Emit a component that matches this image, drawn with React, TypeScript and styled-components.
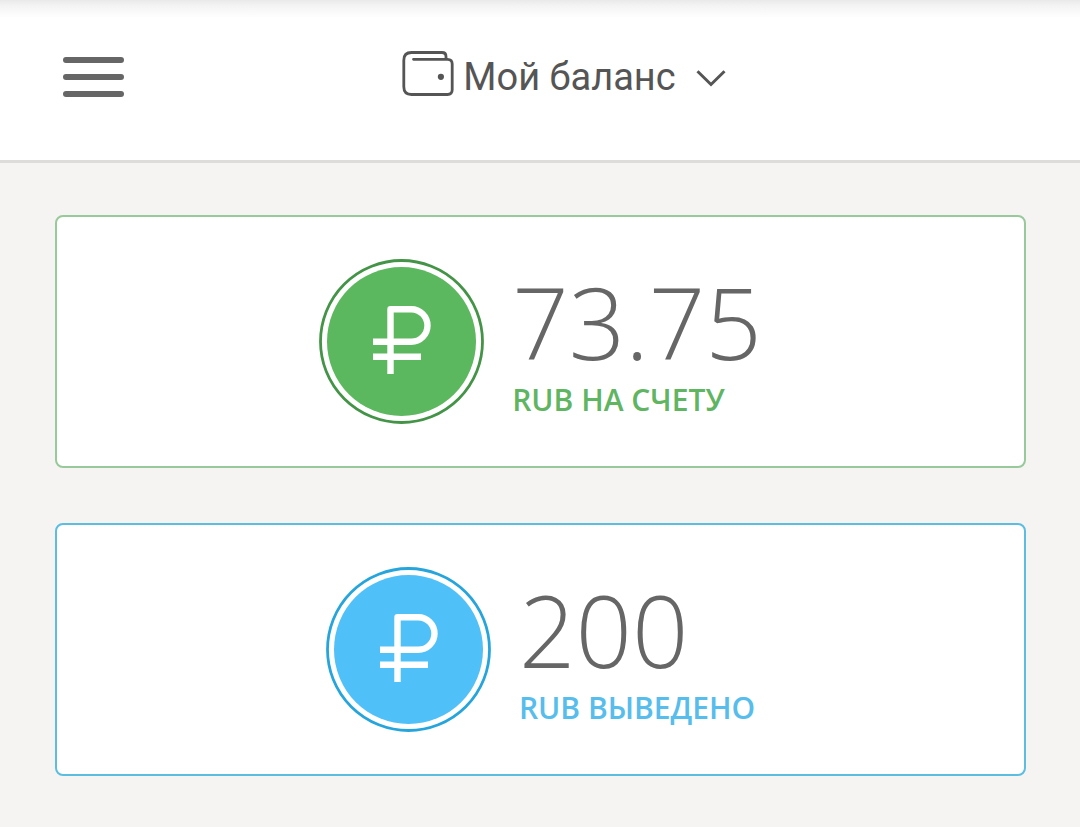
import React from 'react';
import styled, { createGlobalStyle } from 'styled-components';

const GlobalStyle = createGlobalStyle`
  *, *::before, *::after { box-sizing: border-box; }
  body {
    margin: 0;
    min-height: 100vh;
    background: #f5f4f2;
    color: #666;
    font-family: "Open Sans", "Noto Sans", sans-serif;
  }
`;

const Header = styled.header`
  display: flex;
  align-items: center;
  height: 163px;
  padding: 0 76px 6px 63px;
  border-bottom: 3px solid #dddcda;
  background: linear-gradient(#e9e9e9, #f4f4f4 6px, #fff 18px);
`;

const MenuButton = styled.button`
  display: flex;
  flex-direction: column;
  gap: 11px;
  width: 61px;
  padding: 0;
  border: 0;
  background: none;
  cursor: pointer;
`;

const MenuBar = styled.span`
  height: 6px;
  border-radius: 3px;
  background: #666;
`;

const Title = styled.h1`
  flex: 1;
  display: flex;
  justify-content: center;
  margin: 0;
  font-size: 38px;
  font-weight: 400;
`;

const TitleButton = styled.button`
  display: flex;
  align-items: flex-start;
  padding: 0;
  border: 0;
  background: none;
  color: #555;
  font: 400 38px/52px Roboto, "Noto Sans", sans-serif;
  cursor: pointer;

  svg:last-child {
    align-self: center;
  }
`;

const TitleText = styled.span`
  margin: 0 20px 0 9px;
`;

const Cards = styled.main`
  display: flex;
  flex-direction: column;
  gap: 55px;
  padding: 52px 54px 52px 55px;
`;

const Card = styled.section<{ $border: string }>`
  display: flex;
  align-items: center;
  justify-content: center;
  gap: 28px;
  height: 253px;
  border: 2px solid ${(p) => p.$border};
  border-radius: 8px;
  background: #fff;
`;

const Amount = styled.p`
  margin: 0;
  font-size: 99px;
  line-height: 116px;
  font-weight: 300;
  color: #666;
`;

const Caption = styled.p<{ $color: string }>`
  margin: 0;
  font-size: 30px;
  line-height: 40px;
  font-weight: 600;
  color: ${(p) => p.$color};
`;

const WalletIcon = () => (
  <svg width="52" height="46" viewBox="0 0 52 46" fill="none" stroke="currentColor" strokeWidth="2.8" strokeLinecap="round" strokeLinejoin="round" aria-hidden="true">
    <path d="M11.5 8.3H45.5Q50.2 8.3 50.2 13V38.8Q50.2 43.5 45.5 43.5H9.5Q1.8 43.5 1.8 35.8V9.2Q1.8 1.5 9.5 1.5H40Q44 1.5 44 5.5V8.3" />
    <circle cx="38.9" cy="25.8" r="3.1" fill="currentColor" stroke="none" />
  </svg>
);

const ChevronIcon = () => (
  <svg width="30" height="20" viewBox="0 0 30 20" fill="none" stroke="currentColor" strokeWidth="3" aria-hidden="true">
    <path d="M1.5 4.3L15 17.5L28.5 4.3" />
  </svg>
);

const Coin = ({ fill, ring }: { fill: string; ring: string }) => (
  <svg width="165" height="165" viewBox="0 0 165 165" fill="none" aria-hidden="true">
    <circle cx="82.5" cy="82.5" r="81" stroke={ring} strokeWidth="2.8" />
    <circle cx="82.5" cy="82.5" r="74.5" fill={fill} />
    <g stroke="#fff" strokeWidth="6.4" strokeLinecap="butt" strokeLinejoin="round">
      <path d="M71.5 115V50.2H92.2A16.3 16.3 0 0 1 92.2 82.8H54" />
      <path d="M54 97.8H102" />
    </g>
  </svg>
);

const balances = [
  { amount: '73.75', caption: 'RUB НА СЧЕТУ', fill: '#5cb85f', ring: '#439447', border: '#97c99a', text: '#5fb562' },
  { amount: '200', caption: 'RUB ВЫВЕДЕНО', fill: '#4fc1f8', ring: '#26a5dc', border: '#5bbde0', text: '#56bdec' },
];

export default function App() {
  return (
    <>
      <GlobalStyle />
      <Header>
        <MenuButton type="button" aria-label="Меню">
          <MenuBar />
          <MenuBar />
          <MenuBar />
        </MenuButton>
        <Title>
          <TitleButton type="button">
            <WalletIcon />
            <TitleText>Мой баланс</TitleText>
            <ChevronIcon />
          </TitleButton>
        </Title>
      </Header>
      <Cards>
        {balances.map((b) => (
          <Card key={b.caption} $border={b.border}>
            <Coin fill={b.fill} ring={b.ring} />
            <div>
              <Amount>{b.amount}</Amount>
              <Caption $color={b.text}>{b.caption}</Caption>
            </div>
          </Card>
        ))}
      </Cards>
    </>
  );
}
